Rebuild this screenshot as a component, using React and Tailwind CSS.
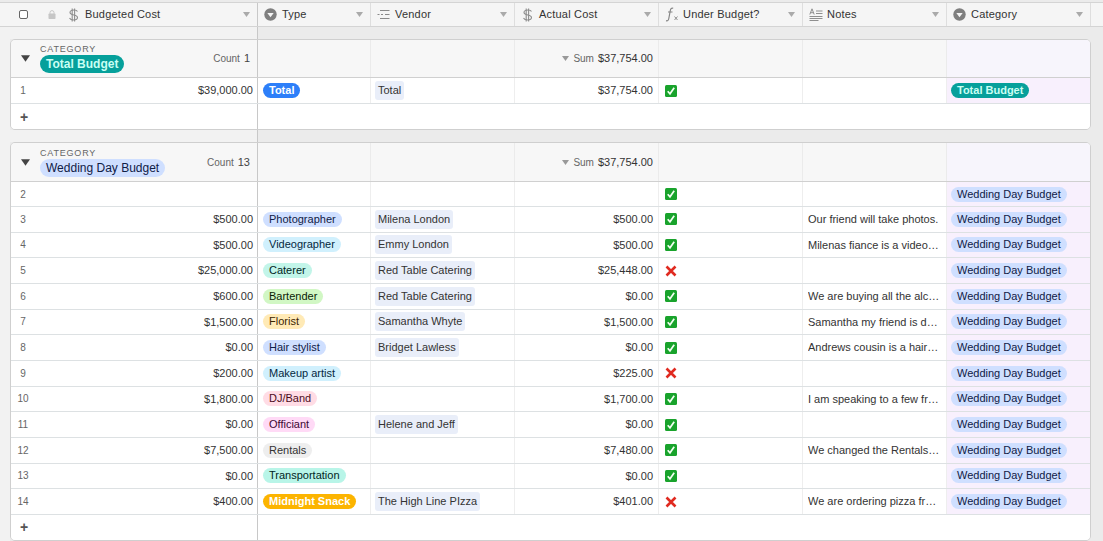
import React from 'react';
import { ChevronDown } from 'lucide-react';

const font = "font-['Liberation_Sans',Arial,sans-serif]";

const pillColors = {
  blue: 'bg-[#2d7ff9] text-white font-bold',
  teal: 'bg-[#06a09b] text-[#c9fff3] font-bold',
  orange: 'bg-[#fcb400] text-white font-bold',
  periwinkle: 'bg-[#cfdfff] text-[#102046]',
  cyan: 'bg-[#d0f0fd] text-[#04283f]',
  mint: 'bg-[#c2f5e9] text-[#012524]',
  green: 'bg-[#d1f7c4] text-[#0b1d05]',
  yellow: 'bg-[#ffeab6] text-[#3b2501]',
  pink: 'bg-[#ffdce5] text-[#4c0c1c]',
  magenta: 'bg-[#ffdaf6] text-[#400832]',
  gray: 'bg-[#eeeeee] text-[#333333]',
  turquoise: 'bg-[#b8f5e8] text-[#012524]',
};

const Pill = ({ color, children, big }) => (
  <span className={`inline-block whitespace-nowrap rounded-full ${big ? 'px-[6px] text-[12px] leading-[18px]' : 'px-[6px] text-[11px] leading-[15px]'} ${pillColors[color]}`}>
    {children}
  </span>
);

const DollarIcon = () => (
  <svg width="11" height="14" viewBox="0 0 11 14" fill="none" stroke="#8f8f8f" strokeWidth="1.1">
    <path d="M9.5 3.6C9 2.5 7.8 2 6 2 3.6 2 2 2.9 2 4.5c0 3.4 7.5 1.6 7.5 5 0 1.6-1.7 2.5-4 2.5-1.9 0-3.3-.6-4-1.9" />
    <path d="M4.2 .5v13M6.6 .5v13" />
  </svg>
);

const SelectIcon = () => (
  <svg width="13" height="13" viewBox="0 0 13 13">
    <circle cx="6.5" cy="6.5" r="6.2" fill="#7f7f7f" />
    <path d="M3.3 5h6.4L6.5 9.3z" fill="#f5f5f5" />
  </svg>
);

const LinkIcon = () => (
  <svg width="13" height="11" viewBox="0 0 13 11" stroke="#8a8a8a" strokeWidth="1" fill="none">
    <path d="M3 1.5h9.5M4 5.5h2M8 5.5h4.5M3 9.5h9.5M.5 5.5h2" />
  </svg>
);

const FormulaIcon = () => (
  <svg width="14" height="15" viewBox="0 0 14 15" fill="none" stroke="#858585">
    <path d="M8.2 1.2C6.2.6 5.6 1.8 5.2 4L3.8 11.5c-.3 1.7-1 2.6-2.8 2.2" strokeWidth="1.2" />
    <path d="M3 5h4.5" strokeWidth="1" />
    <path d="M9.5 9.5l3 3.5M12.5 9.5l-3 3.5" strokeWidth="0.9" />
  </svg>
);

const NotesIcon = () => (
  <svg width="14" height="13" viewBox="0 0 14 13" fill="none" stroke="#8f8f8f" strokeWidth="1">
    <path d="M.8 6.5L3 .8l2.2 5.7M1.5 4.7h3" />
    <path d="M7 3h6.5M7 5.5h6.5M.5 8.5h13M.5 10.5h13M.5 12.5h9" />
  </svg>
);

const LockIcon = () => (
  <svg width="8" height="9" viewBox="0 0 8 9" fill="#c6c6c6">
    <rect x="0.5" y="3.5" width="7" height="5.5" rx="0.8" />
    <path d="M2 3.8V2.6a2 2 0 0 1 4 0v1.2" fill="none" stroke="#c6c6c6" />
  </svg>
);

const Caret = ({ className = 'fill-[#aaaaaa]', size = 6 }) => (
  <svg width={size + 1} height={size - 1} viewBox="0 0 7 5" className={className}>
    <path d="M0 0h7L3.5 5z" />
  </svg>
);

const CheckMark = () => (
  <svg width="12" height="12" viewBox="0 0 12 12">
    <rect width="12" height="12" rx="1.5" fill="#19a32c" />
    <path d="M2.7 6.2l2.3 2.6 4.2-6" fill="none" stroke="#f2fff2" strokeWidth="1.7" />
  </svg>
);

const CrossMark = () => (
  <svg width="12" height="12" viewBox="0 0 12 12">
    <path d="M1.5 1.5l9 9M10.5 1.5l-9 9" stroke="#e02a20" strokeWidth="2.6" />
  </svg>
);

const HeaderCell = ({ icon, label, className = '' }) => (
  <div className={`flex items-center border-r border-[#dedede] pl-[5px] pr-[7px] ${className}`}>
    <span className="flex w-[15px] shrink-0 justify-center">{icon}</span>
    <span className="ml-[4px] flex-1 whitespace-nowrap text-[11px] tracking-[0.2px] text-[#333333]">{label}</span>
    <Caret />
  </div>
);

const Header = () => (
  <div className="flex h-[25px] border-y border-[#d4d4d4] bg-[#f5f5f5]">
    <div className="flex w-[258px] shrink-0 items-center border-r border-[#c8c8c8] pr-[7px]">
      <span className="ml-[19px] h-[9px] w-[9px] rounded-[2px] border border-[#666666] bg-white" />
      <span className="ml-[20px] flex w-[8px] justify-center"><LockIcon /></span>
      <span className="ml-[12px]"><DollarIcon /></span>
      <span className="ml-[6px] flex-1 text-[11px] tracking-[0.2px] text-[#333333]">Budgeted Cost</span>
      <Caret />
    </div>
    <HeaderCell className="w-[113px]" icon={<SelectIcon />} label="Type" />
    <HeaderCell className="w-[144px]" icon={<LinkIcon />} label="Vendor" />
    <HeaderCell className="w-[144px]" icon={<DollarIcon />} label="Actual Cost" />
    <HeaderCell className="w-[144px]" icon={<FormulaIcon />} label="Under Budget?" />
    <HeaderCell className="w-[144px]" icon={<NotesIcon />} label="Notes" />
    <HeaderCell className="w-[144px]" icon={<SelectIcon />} label="Category" />
  </div>
);

const cellW = ['w-[113px]', 'w-[144px]', 'w-[144px]', 'w-[144px]', 'w-[144px]', 'w-[144px]'];

const GroupHeader = ({ name, color, count, h }) => (
  <div className={`flex ${h} border-b border-[#d0d0d0] bg-[#f7f7f7]`}>
    <div className="flex w-[247px] shrink-0 items-center border-r border-[#c8c8c8] pr-[7px]">
      <span className="ml-[10px]"><Caret className="fill-[#444444]" size={8} /></span>
      <div className="ml-[10px] flex flex-1 flex-col items-start">
        <span className="text-[9px] leading-[11px] tracking-[0.8px] text-[#666666]">CATEGORY</span>
        <Pill color={color} big>{name}</Pill>
      </div>
      <span className="text-[10px] text-[#666666]">Count</span>
      <span className="ml-[4px] text-[11px] text-[#444444]">{count}</span>
    </div>
    <div className={`${cellW[0]} border-r border-[#ebebeb]`} />
    <div className={`${cellW[1]} border-r border-[#ebebeb]`} />
    <div className={`${cellW[2]} flex items-center justify-end gap-[4px] border-r border-[#ebebeb] pr-[5px]`}>
      <Caret className="fill-[#999999]" />
      <span className="text-[10px] text-[#666666]">Sum</span>
      <span className="text-[11px] text-[#333333]">$37,754.00</span>
    </div>
    <div className={`${cellW[3]} border-r border-[#ebebeb]`} />
    <div className={`${cellW[4]} border-r border-[#ebebeb]`} />
    <div className="flex-1 bg-[#f7f5fc]" />
  </div>
);

const Row = ({ n, budget, type, typeColor, vendor, actual, ok, note, category, catColor, h }) => (
  <div className={`flex ${h} border-b border-[#dde1e3] bg-white text-[11px] text-[#333333]`}>
    <div className="flex w-[247px] shrink-0 items-center justify-between border-r border-[#c8c8c8] pr-[4px]">
      <span className="w-[24px] text-center text-[10px] text-[#666666]">{n}</span>
      <span>{budget}</span>
    </div>
    <div className={`${cellW[0]} flex items-center border-r border-[#eeeeee] pl-[5px]`}>
      {type && <Pill color={typeColor}>{type}</Pill>}
    </div>
    <div className={`${cellW[1]} flex items-center border-r border-[#eeeeee] pl-[4px]`}>
      {vendor && <span className="rounded-[3px] bg-[#e9eef9] px-[3px] leading-[19px]">{vendor}</span>}
    </div>
    <div className={`${cellW[2]} flex items-center justify-end border-r border-[#eeeeee] pr-[5px]`}>{actual}</div>
    <div className={`${cellW[3]} flex items-center border-r border-[#eeeeee] pl-[6px]`}>
      {ok ? <CheckMark /> : <CrossMark />}
    </div>
    <div className={`${cellW[4]} flex items-center overflow-hidden border-r border-[#eeeeee] px-[5px]`}>
      <span className="truncate">{note}</span>
    </div>
    <div className="flex flex-1 items-center bg-[#f8f0fd] pl-[4px]">
      <Pill color={catColor}>{category}</Pill>
    </div>
  </div>
);

const AddRow = () => (
  <div className="flex h-[25px] bg-white">
    <div className="flex w-[247px] shrink-0 items-center border-r border-[#c8c8c8] pl-[9px]">
      <span className="text-[14px] font-bold leading-none text-[#555555]">+</span>
    </div>
    <div className="flex-1" />
  </div>
);

const Gap = ({ h }) => (
  <div className={`flex ${h}`}>
    <div className="w-[258px] shrink-0 border-r border-[#c8c8c8] bg-[#f2f2f2]" />
    <div className="flex-1 bg-[#ebebeb]" />
  </div>
);

const Card = ({ children }) => (
  <div className="flex">
    <div className="w-[10px] shrink-0 bg-[#f2f2f2]" />
    <div className="w-[1081px] shrink-0 overflow-hidden rounded-[5px] border border-[#cfcfcf]">{children}</div>
    <div className="flex-1 bg-[#ebebeb]" />
  </div>
);

const W = 'Wedding Day Budget';
const rows = [
  [2, '', '', '', '', '', true, ''],
  [3, '$500.00', 'Photographer', 'periwinkle', 'Milena London', '$500.00', true, 'Our friend will take photos.'],
  [4, '$500.00', 'Videographer', 'cyan', 'Emmy London', '$500.00', true, 'Milenas fiance is a videographer and will help.'],
  [5, '$25,000.00', 'Caterer', 'mint', 'Red Table Catering', '$25,448.00', false, ''],
  [6, '$600.00', 'Bartender', 'green', 'Red Table Catering', '$0.00', true, 'We are buying all the alcohol ourselves.'],
  [7, '$1,500.00', 'Florist', 'yellow', 'Samantha Whyte', '$1,500.00', true, 'Samantha my friend is designing the flowers.'],
  [8, '$0.00', 'Hair stylist', 'periwinkle', 'Bridget Lawless', '$0.00', true, 'Andrews cousin is a hair stylist and offered.'],
  [9, '$200.00', 'Makeup artist', 'cyan', '', '$225.00', false, ''],
  [10, '$1,800.00', 'DJ/Band', 'pink', '', '$1,700.00', true, 'I am speaking to a few friends about this one.'],
  [11, '$0.00', 'Officiant', 'magenta', 'Helene and Jeff', '$0.00', true, ''],
  [12, '$7,500.00', 'Rentals', 'gray', '', '$7,480.00', true, 'We changed the Rentals company last minute.'],
  [13, '$0.00', 'Transportation', 'turquoise', '', '$0.00', true, ''],
  [14, '$400.00', 'Midnight Snack', 'orange', 'The High Line PIzza', '$401.00', false, 'We are ordering pizza from the High Line.'],
];

export default function App() {
  return (
    <div className={`h-[541px] w-[1103px] overflow-hidden bg-[#ebebeb] pt-[2px] ${font}`}>
      <Header />
      <Gap h="h-[12px]" />
      <Card>
        <GroupHeader name="Total Budget" color="teal" count="1" h="h-[38px]" />
        <Row n={1} budget="$39,000.00" type="Total" typeColor="blue" vendor="Total" actual="$37,754.00" ok note="" category="Total Budget" catColor="teal" h="h-[26px]" />
        <AddRow />
      </Card>
      <Gap h="h-[12px]" />
      <Card>
        <GroupHeader name={W} color="periwinkle" count="13" h="h-[39px]" />
        {rows.map(([n, budget, type, typeColor, vendor, actual, ok, note], i) => (
          <Row
            key={n}
            n={n}
            budget={budget}
            type={type}
            typeColor={typeColor}
            vendor={vendor}
            actual={actual}
            ok={ok}
            note={note}
            category={W}
            catColor="periwinkle"
            h={i === 0 ? 'h-[25px]' : 'h-[25.67px]'}
          />
        ))}
        <AddRow />
      </Card>
    </div>
  );
}
